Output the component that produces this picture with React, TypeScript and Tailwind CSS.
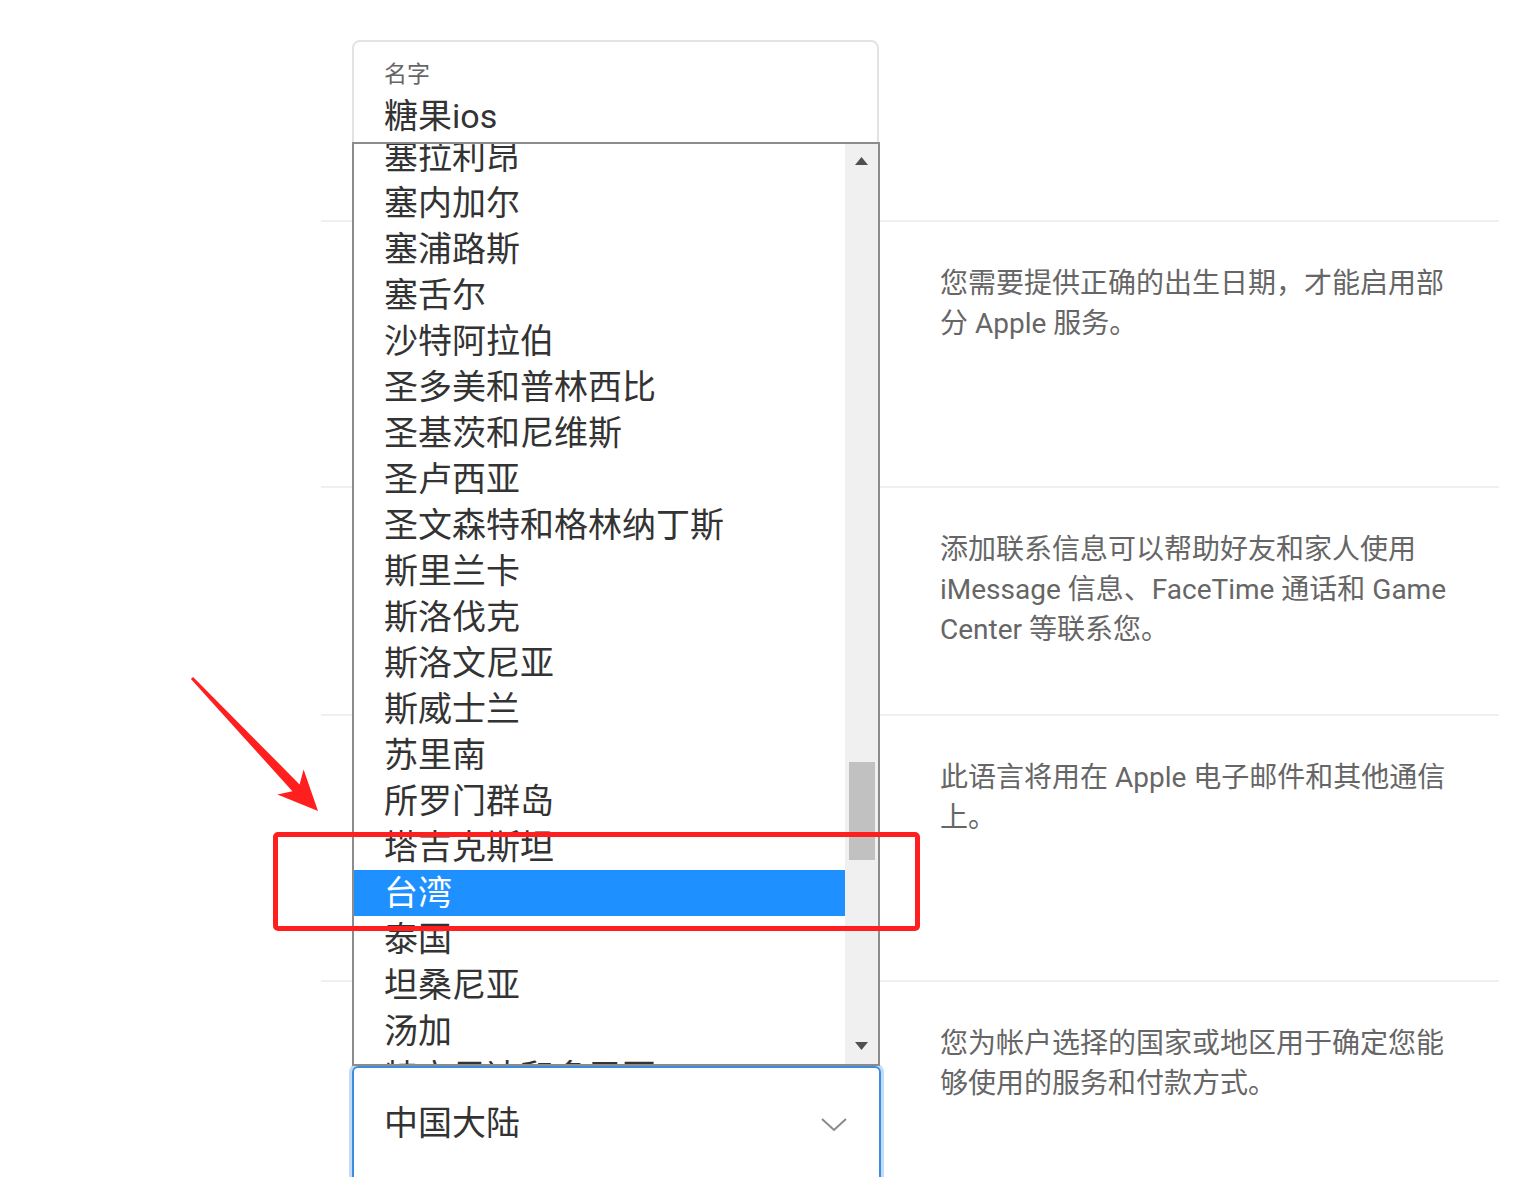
const countries = [
  "塞拉利昂",
  "塞内加尔",
  "塞浦路斯",
  "塞舌尔",
  "沙特阿拉伯",
  "圣多美和普林西比",
  "圣基茨和尼维斯",
  "圣卢西亚",
  "圣文森特和格林纳丁斯",
  "斯里兰卡",
  "斯洛伐克",
  "斯洛文尼亚",
  "斯威士兰",
  "苏里南",
  "所罗门群岛",
  "塔吉克斯坦",
  "台湾",
  "泰国",
  "坦桑尼亚",
  "汤加",
  "特立尼达和多巴哥",
];

function Divider() {
  return <div className="h-[2px] bg-[#efefef]" />;
}

function Note({ lines }: { lines: string[] }) {
  return (
    <div className="w-[559px] pt-[42px] text-[28px] leading-[40px] text-[#666]">
      {lines.map((l) => (
        <div key={l}>{l}</div>
      ))}
    </div>
  );
}

function CountryList() {
  return (
    <div className="absolute left-[352px] top-[142px] z-10 flex h-[924px] w-[528px] overflow-hidden border-2 border-[#8c8c8c] bg-white">
      <div className="flex-1 overflow-hidden">
        <ul className="-mt-[10px]">
          {countries.map((c) => (
            <li
              key={c}
              className={`h-[46px] pl-[30px] text-[34px] leading-[46px] whitespace-nowrap ${
                c === "台湾" ? "bg-[#1e90ff] text-white" : "text-[#333]"
              }`}
            >
              {c}
            </li>
          ))}
        </ul>
      </div>
      {/* scrollbar */}
      <div className="relative w-[33px] bg-[#f0f0f0]">
        <svg className="absolute left-[10px] top-[13px]" width="13" height="8" viewBox="0 0 13 8">
          <path d="M6.5 0 L13 8 L0 8 Z" fill="#505050" />
        </svg>
        <div className="absolute left-[4px] top-[618px] h-[98px] w-[26px] bg-[#c1c1c1]" />
        <svg className="absolute left-[10px] bottom-[14px]" width="13" height="8" viewBox="0 0 13 8">
          <path d="M0 0 L13 0 L6.5 8 Z" fill="#505050" />
        </svg>
      </div>
    </div>
  );
}

export default function App() {
  return (
    <div className="relative h-[1177px] w-[1531px] overflow-hidden bg-white font-['Roboto','Noto_Sans_CJK_SC',sans-serif]">
      <div className="ml-[321px] w-[1178px]">
        {/* name */}
        <div className="flex h-[220px]">
          <div className="w-[619px] pl-[31px] pt-[40px]">
            <div className="h-[130px] w-[527px] rounded-t-lg border-2 border-[#e3e3e3] px-[30px] pt-[18px]">
              <div className="text-[23px] leading-[30px] text-[#666]">名字</div>
              <div className="mt-[4px] text-[34px] leading-[44px] text-[#333]">糖果ios</div>
            </div>
          </div>
        </div>
        <Divider />

        {/* birthday */}
        <div className="flex h-[264px]">
          <div className="w-[619px]" />
          <Note lines={["您需要提供正确的出生日期，才能启用部", "分 Apple 服务。"]} />
        </div>
        <Divider />

        {/* contact */}
        <div className="flex h-[226px]">
          <div className="w-[619px]" />
          <Note
            lines={[
              "添加联系信息可以帮助好友和家人使用",
              "iMessage 信息、FaceTime 通话和 Game",
              "Center 等联系您。",
            ]}
          />
        </div>
        <Divider />

        {/* language */}
        <div className="flex h-[264px]">
          <div className="w-[619px]" />
          <Note lines={["此语言将用在 Apple 电子邮件和其他通信", "上。"]} />
        </div>
        <Divider />

        {/* country */}
        <div className="flex h-[200px]">
          <div className="w-[619px] pl-[31px] pt-[84px]">
            <div className="flex h-[120px] w-[529px] items-start justify-between rounded-md border-2 border-[#3c8de0] pl-[30px] pr-[32px] pt-[33px] shadow-[0_0_0_3px_rgba(120,175,240,0.45)]">
              <span className="text-[34px] leading-[44px] text-[#333]">中国大陆</span>
              <svg className="mt-[17px]" width="26" height="14" viewBox="0 0 26 14">
                <path d="M1 1 L13 12 L25 1" fill="none" stroke="#8a8a8a" strokeWidth="2" />
              </svg>
            </div>
          </div>
          <Note lines={["您为帐户选择的国家或地区用于确定您能", "够使用的服务和付款方式。"]} />
        </div>
      </div>

      <CountryList />

      {/* annotation */}
      <div className="absolute left-[273px] top-[832px] z-20 h-[99px] w-[647px] rounded-[5px] border-[5px] border-[#ff1f1f]" />
      <svg className="absolute left-[180px] top-[665px] z-20" width="150" height="160" viewBox="0 0 150 160">
        <polygon
          points="13.1,12 119.6,119.4 123.6,104.6 138,146 97.4,129.4 112.4,126.2 10.9,14"
          fill="#ff1f1f"
        />
      </svg>
    </div>
  );
}
